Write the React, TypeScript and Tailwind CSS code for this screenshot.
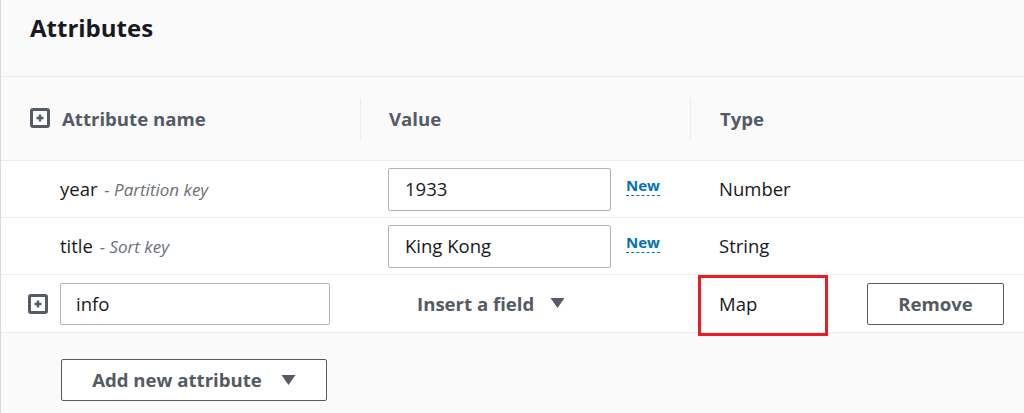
import React from "react";

function PlusBox() {
  return (
    <svg width="20" height="20" viewBox="0 0 20 20" className="shrink-0">
      <rect x="1.5" y="1.5" width="17" height="17" rx="1.5" fill="none" stroke="#545b64" strokeWidth="3" />
      <path d="M10 6.5v7M6.5 10h7" stroke="#545b64" strokeWidth="2.4" />
    </svg>
  );
}

function Caret() {
  return (
    <svg width="15" height="12" viewBox="0 0 15 12" className="shrink-0">
      <path d="M0.5 1h14L7.5 11z" fill="#545b64" />
    </svg>
  );
}

function HeaderSep() {
  return <div className="w-px h-[41px] bg-[#eaeded] shrink-0" />;
}

function NewTag() {
  return (
    <span className="ml-[15px] mb-[7px] text-[15px] font-bold text-[#0073bb] leading-[20px] border-b border-dashed border-[#0073bb]">
      New
    </span>
  );
}

interface KeyRow {
  name: string;
  keyLabel: string;
  value: string;
  type: string;
}

const keyRows: KeyRow[] = [
  { name: "year", keyLabel: "Partition key", value: "1933", type: "Number" },
  { name: "title", keyLabel: "Sort key", value: "King Kong", type: "String" },
];

export default function App() {
  return (
    <div className="w-[1024px] h-[413px] overflow-hidden bg-[#fafafa] border-l border-[#d5dbdb] font-['Open_Sans',sans-serif] text-[#16191f]">
      <div className="h-[76px] pl-[29px] pt-[12px]">
        <h2 className="text-[24px] font-bold leading-[32px]">Attributes</h2>
      </div>

      {/* Table header */}
      <div className="flex items-center h-[85px] border-t border-b border-[#eaeded] text-[18.6px] font-bold text-[#545b64]">
        <div className="w-[359px] flex items-center gap-3 pl-[29px]">
          <PlusBox />
          <span>Attribute name</span>
        </div>
        <div className="w-[330px] flex items-center">
          <HeaderSep />
          <span className="ml-[28px]">Value</span>
        </div>
        <div className="flex items-center">
          <HeaderSep />
          <span className="ml-[29px]">Type</span>
        </div>
      </div>

      {/* Key rows */}
      {keyRows.map((row) => (
        <div key={row.name} className="flex items-center h-[57px] bg-white border-b border-[#eaeded]">
          <div className="w-[359px] pl-[59px] text-[18.5px]">
            {row.name}{" "}
            <span className="ml-[2px] text-[17px] italic text-[#687078]">- {row.keyLabel}</span>
          </div>
          <div className="w-[330px] flex items-center">
            <div className="ml-[28px] w-[223px] h-[43px] flex items-center pl-4 border border-[#aab7b8] rounded-[2px] bg-white text-[18.5px]">
              {row.value}
            </div>
            <NewTag />
          </div>
          <div className="pl-[29px] text-[18.5px]">{row.type}</div>
        </div>
      ))}

      {/* Map row */}
      <div className="flex items-center h-[58px] bg-white border-b border-[#eaeded]">
        <div className="w-[359px] flex items-center gap-3 pl-[27px]">
          <PlusBox />
          <div className="w-[270px] h-[42px] flex items-center pl-[15px] border border-[#aab7b8] rounded-[2px] text-[18.5px]">
            info
          </div>
        </div>
        <div className="w-[330px] flex items-center gap-4 pl-[57px] text-[18.6px] font-bold text-[#545b64]">
          <span>Insert a field</span>
          <Caret />
        </div>
        <div className="relative w-[160px] h-full flex items-center pl-[29px] text-[18.5px]">
          Map
          <div className="absolute left-[8px] top-0 w-[130px] h-[61px] border-[3px] border-[#ea1c24]" />
        </div>
        <button className="ml-[17px] w-[137px] h-[42px] border border-[#545b64] rounded-[2px] bg-white text-[18.6px] font-bold text-[#545b64]">
          Remove
        </button>
      </div>

      <div className="pl-[60px] pt-[26px]">
        <button className="w-[266px] h-[42px] flex items-center justify-center gap-[19px] border border-[#545b64] rounded-[2px] bg-white text-[18.6px] font-bold text-[#545b64]">
          <span>Add new attribute</span>
          <Caret />
        </button>
      </div>
    </div>
  );
}
